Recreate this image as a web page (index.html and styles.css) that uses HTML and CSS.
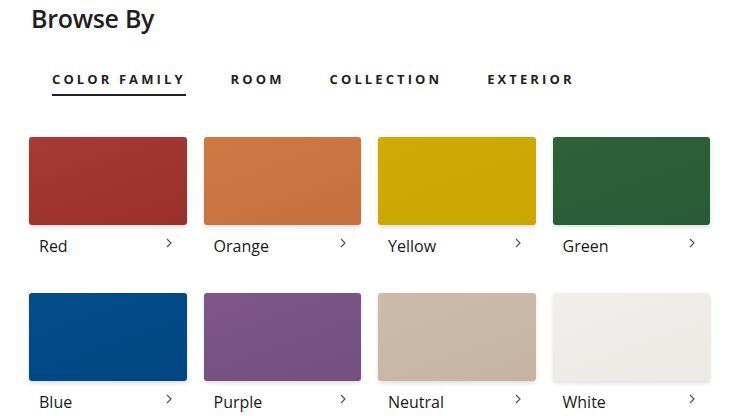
FILE: index.html
```html
<!DOCTYPE html>
<html lang="en">
<head>
<meta charset="utf-8">
<link rel="stylesheet" href="styles.css">
</head>
<body>
<main class="page">
  <h1 class="title">Browse By</h1>
  <nav class="tabs">
    <a class="tab active">COLOR FAMILY</a>
    <a class="tab">ROOM</a>
    <a class="tab">COLLECTION</a>
    <a class="tab">EXTERIOR</a>
  </nav>
  <section class="grid">
    <a class="card"><div class="swatch red"></div><div class="label"><span>Red</span><svg class="chev" viewBox="0 0 6 10"><polyline points="1,1 5,5 1,9"/></svg></div></a>
    <a class="card"><div class="swatch orange"></div><div class="label"><span>Orange</span><svg class="chev" viewBox="0 0 6 10"><polyline points="1,1 5,5 1,9"/></svg></div></a>
    <a class="card"><div class="swatch yellow"></div><div class="label"><span>Yellow</span><svg class="chev" viewBox="0 0 6 10"><polyline points="1,1 5,5 1,9"/></svg></div></a>
    <a class="card"><div class="swatch green"></div><div class="label"><span>Green</span><svg class="chev" viewBox="0 0 6 10"><polyline points="1,1 5,5 1,9"/></svg></div></a>
    <a class="card"><div class="swatch blue"></div><div class="label"><span>Blue</span><svg class="chev" viewBox="0 0 6 10"><polyline points="1,1 5,5 1,9"/></svg></div></a>
    <a class="card"><div class="swatch purple"></div><div class="label"><span>Purple</span><svg class="chev" viewBox="0 0 6 10"><polyline points="1,1 5,5 1,9"/></svg></div></a>
    <a class="card"><div class="swatch neutral"></div><div class="label"><span>Neutral</span><svg class="chev" viewBox="0 0 6 10"><polyline points="1,1 5,5 1,9"/></svg></div></a>
    <a class="card"><div class="swatch white"></div><div class="label"><span>White</span><svg class="chev" viewBox="0 0 6 10"><polyline points="1,1 5,5 1,9"/></svg></div></a>
  </section>
</main>
</body>
</html>
```
FILE: styles.css
```css
* { box-sizing: border-box; }
html, body { margin: 0; background: #fff; }
body {
  font-family: "Open Sans", "Liberation Sans", sans-serif;
  color: #222;
  overflow: hidden;
}
.page { padding: 0 0 0 29px; width: 740px; }
.title {
  margin: 0;
  padding-left: 2px;
  font-size: 25px;
  font-weight: 600;
  line-height: 36px;
  letter-spacing: -0.3px;
  color: #1e1e1e;
}
.tabs {
  display: flex;
  gap: 48px;
  margin-top: 34px;
  padding-left: 23px;
}
.tab {
  font-size: 13px;
  font-weight: 700;
  letter-spacing: 3.1px;
  line-height: 18px;
  color: #222;
  padding-bottom: 6px;
  border-bottom: 2px solid transparent;
  margin-right: -3px;
}
.tab.active { border-bottom-color: #222; }
.grid {
  margin-top: 41px;
  width: 681px;
  display: grid;
  grid-template-columns: repeat(4, 1fr);
  column-gap: 17px;
  row-gap: 36px;
}
.card { display: block; }
.swatch {
  height: 88px;
  border-radius: 3px;
  box-shadow: 0 2px 4px rgba(0,0,0,0.14);
}
.red { background: linear-gradient(160deg, #a63a34, #9a2f2b); }
.orange { background: linear-gradient(160deg, #cd7a45, #c6703d); }
.yellow { background: linear-gradient(160deg, #cfab05, #c9a600); }
.green { background: linear-gradient(160deg, #2e6239, #295a35); }
.blue { background: linear-gradient(160deg, #034d8a, #004783); }
.purple { background: linear-gradient(160deg, #7e5688, #744f80); }
.neutral { background: linear-gradient(160deg, #cdbcab, #c6b4a2); }
.white { background: linear-gradient(160deg, #f0efeb, #ebe9e4); }
.label {
  margin-top: 10px;
  display: flex;
  justify-content: space-between;
  align-items: flex-start;
  padding: 0 15px 0 10px;
  font-size: 16px;
  line-height: 22px;
  color: #1a1a1a;
}
.chev {
  width: 6px;
  height: 10px;
  margin-top: 3px;
  fill: none;
  stroke: #555;
  stroke-width: 1.2;
}
```
